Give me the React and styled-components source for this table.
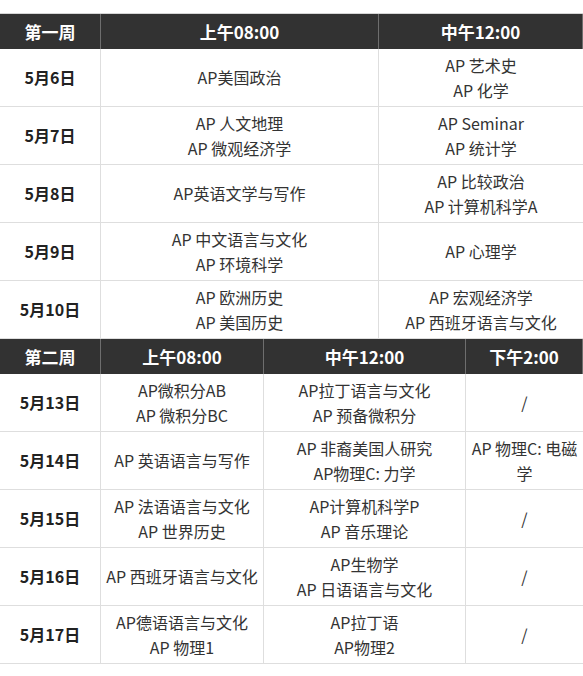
import React from "react";
import styled, { createGlobalStyle } from "styled-components";

const GlobalStyle = createGlobalStyle`
  html, body {
    margin: 0;
    padding: 0;
    background: #fff;
  }
  body {
    font-family: "Noto Sans CJK SC", "Noto Sans", sans-serif;
    color: #333;
  }
`;

const week1 = [
  { date: "5月6日", slots: [["AP美国政治"], ["AP 艺术史", "AP 化学"]] },
  { date: "5月7日", slots: [["AP 人文地理", "AP 微观经济学"], ["AP Seminar", "AP 统计学"]] },
  { date: "5月8日", slots: [["AP英语文学与写作"], ["AP 比较政治", "AP 计算机科学A"]] },
  { date: "5月9日", slots: [["AP 中文语言与文化", "AP 环境科学"], ["AP 心理学"]] },
  { date: "5月10日", slots: [["AP 欧洲历史", "AP 美国历史"], ["AP 宏观经济学", "AP 西班牙语言与文化"]] },
];

const week2 = [
  { date: "5月13日", slots: [["AP微积分AB", "AP 微积分BC"], ["AP拉丁语言与文化", "AP 预备微积分"], ["/"]] },
  { date: "5月14日", slots: [["AP 英语语言与写作"], ["AP 非裔美国人研究", "AP物理C: 力学"], ["AP 物理C: 电磁", "学"]] },
  { date: "5月15日", slots: [["AP 法语语言与文化", "AP 世界历史"], ["AP计算机科学P", "AP 音乐理论"], ["/"]] },
  { date: "5月16日", slots: [["AP 西班牙语言与文化"], ["AP生物学", "AP 日语语言与文化"], ["/"]] },
  { date: "5月17日", slots: [["AP德语语言与文化", "AP 物理1"], ["AP拉丁语", "AP物理2"], ["/"]] },
];

const Page = styled.div`
  padding-top: 13px;
  width: 583px;
`;

const Table = styled.div`
  display: grid;
  grid-template-columns: ${({ $cols }) => $cols};
  border-top: ${({ $first }) => ($first ? "1px solid #d6d6d6" : "none")};
`;

const HeadCell = styled.div`
  height: 35px;
  box-sizing: border-box;
  background: #323232;
  color: #fff;
  font-weight: 700;
  font-size: 17px;
  display: flex;
  align-items: center;
  justify-content: center;
  border-right: 1px solid #6e6e6e;
  &:last-child {
    border-right: none;
  }
`;

const Cell = styled.div`
  height: 58px;
  box-sizing: border-box;
  border-bottom: 1px solid #dedede;
  border-right: 1px solid #dedede;
  display: flex;
  flex-direction: column;
  align-items: center;
  justify-content: center;
  text-align: center;
  font-size: 16px;
  line-height: 25px;
  color: ${({ $date }) => ($date ? "#222" : "#333")};
  font-weight: ${({ $date }) => ($date ? 700 : 400)};
  white-space: nowrap;
  &:nth-child(${({ $n }) => $n}n) {
    border-right: none;
  }
`;

const Line = styled.span`
  display: block;
`;

function Week({ title, heads, rows, cols, first }) {
  const n = heads.length + 1;
  return (
    <Table $cols={cols} $first={first}>
      <HeadCell>{title}</HeadCell>
      {heads.map((h) => (
        <HeadCell key={h}>{h}</HeadCell>
      ))}
      {rows.map((row) => (
        <React.Fragment key={row.date}>
          <Cell $date $n={n}>{row.date}</Cell>
          {row.slots.map((lines, i) => (
            <Cell key={i} $n={n}>
              {lines.map((l) => (
                <Line key={l}>{l}</Line>
              ))}
            </Cell>
          ))}
        </React.Fragment>
      ))}
    </Table>
  );
}

export default function App() {
  return (
    <Page>
      <GlobalStyle />
      <Week
        first
        title="第一周"
        heads={["上午08:00", "中午12:00"]}
        rows={week1}
        cols="101px 278px 204px"
      />
      <Week
        title="第二周"
        heads={["上午08:00", "中午12:00", "下午2:00"]}
        rows={week2}
        cols="101px 163px 202px 117px"
      />
    </Page>
  );
}
